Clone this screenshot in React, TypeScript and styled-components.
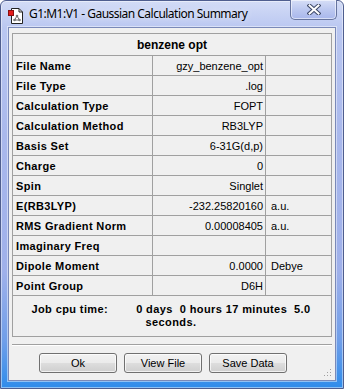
import React from 'react';
import styled, { createGlobalStyle } from 'styled-components';

const GlobalStyle = createGlobalStyle`
  html, body {
    margin: 0;
    padding: 0;
    background: #ffffff;
  }
  body {
    font-family: "Liberation Sans", Arial, sans-serif;
  }
`;

const Window = styled.div`
  box-sizing: border-box;
  width: 344px;
  height: 389px;
  display: flex;
  flex-flow: column nowrap;
  padding: 0 7px 7px 7px;
  border: 1px solid #4f5e8f;
  border-radius: 6px 6px 0 0;
  background: linear-gradient(
    to bottom,
    #d3dcf6 0%,
    #bac7f1 7%,
    #a9b8ec 35%,
    #9fb0ea 70%,
    #6f9ee9 88%,
    #2f8ceb 100%
  );
  box-shadow: inset 0 0 0 1px rgba(255, 255, 255, 0.45);
`;

const TitleBar = styled.div`
  height: 26px;
  display: flex;
  flex-flow: row nowrap;
  align-items: flex-start;
`;

const TitleIcon = styled.svg`
  flex-shrink: 0;
  margin: 6px 0 0 -1px;
`;

const TitleText = styled.span`
  margin: 4px 0 0 5px;
  font-family: "Noto Sans", "Open Sans", sans-serif;
  font-size: 12px;
  letter-spacing: -0.52px;
  line-height: 18px;
  color: #000;
  white-space: nowrap;
  text-shadow: 0 0 6px rgba(255, 255, 255, 0.8);
`;

const CloseButton = styled.div`
  box-sizing: border-box;
  margin: -1px -1px 0 auto;
  width: 47px;
  height: 20px;
  display: flex;
  align-items: center;
  justify-content: center;
  border: 1px solid #66749f;
  border-top: none;
  border-radius: 0 0 5px 5px;
  background: linear-gradient(to bottom, #d6def6 0%, #bcc8f0 50%, #a8b7ec 100%);
  box-shadow: inset 0 0 0 1px rgba(255, 255, 255, 0.55);
`;

const Client = styled.div`
  position: relative;
  flex: 1;
  display: flex;
  flex-flow: column nowrap;
  padding: 5px 0 0 3px;
  background: #f0f0f0;
  border: 1px solid #7a89b8;
  box-shadow: 0 0 0 1px rgba(255, 255, 255, 0.45);
`;

const Grid = styled.div`
  display: grid;
  grid-template-columns: 139px 112px 65px;
  grid-template-rows: 21px repeat(12, 19px) 40px;
  gap: 1px;
  padding: 1px;
  width: 320px;
  box-sizing: border-box;
  background: #a0a0a0;
  font-size: 11px;
  color: #000;
`;

const Cell = styled.div<{ $align?: 'left' | 'right' | 'center'; $bold?: boolean }>`
  background: #f0f0f0;
  display: flex;
  align-items: center;
  justify-content: ${({ $align }) =>
    $align === 'right' ? 'flex-end' : $align === 'center' ? 'center' : 'flex-start'};
  padding: ${({ $align }) => ($align === 'right' ? '0 2px 0 0' : '0 0 0 3px')};
  font-weight: ${({ $bold }) => ($bold ? 700 : 400)};
  letter-spacing: ${({ $bold }) => ($bold ? '0.35px' : '0')};
  white-space: nowrap;
  overflow: hidden;
`;

const HeaderCell = styled(Cell)`
  grid-column: 1 / span 3;
  padding: 0;
  font-size: 12px;
  letter-spacing: 0;
`;

const UnitCell = styled(Cell)`
  padding-left: 5px;
`;

const JobCell = styled.div`
  grid-column: 1 / span 3;
  background: #f0f0f0;
  display: flex;
  flex-flow: column nowrap;
  align-items: center;
  justify-content: center;
  font-weight: 700;
  font-size: 11px;
  letter-spacing: 0.4px;
  line-height: 13px;
  padding-right: 2px;
`;

const JobLine = styled.div`
  display: flex;
  gap: 28px;
  white-space: pre;
`;

const Separator = styled.div`
  width: 320px;
  height: 1px;
  margin-top: 7px;
  background: #a0a0a0;
  border-bottom: 1px solid #ffffff;
`;

const ButtonRow = styled.div`
  display: flex;
  gap: 7px;
  padding: 7px 0 0 27px;
`;

const Button = styled.button`
  box-sizing: border-box;
  width: 78px;
  height: 20px;
  padding: 0;
  border: 1px solid #707070;
  border-radius: 3px;
  background: linear-gradient(to bottom, #f2f2f2 0%, #ebebeb 48%, #dddddd 52%, #cfcfcf 100%);
  box-shadow: inset 0 0 0 1px rgba(255, 255, 255, 0.7);
  font-family: "Liberation Sans", Arial, sans-serif;
  font-size: 11px;
  color: #000;
`;

const Grip = styled.svg`
  position: absolute;
  right: 3px;
  bottom: 3px;
`;

const rows: [string, string, string?][] = [
  ['File Name', 'gzy_benzene_opt'],
  ['File Type', '.log'],
  ['Calculation Type', 'FOPT'],
  ['Calculation Method', 'RB3LYP'],
  ['Basis Set', '6-31G(d,p)'],
  ['Charge', '0'],
  ['Spin', 'Singlet'],
  ['E(RB3LYP)', '-232.25820160', 'a.u.'],
  ['RMS Gradient Norm', '0.00008405', 'a.u.'],
  ['Imaginary Freq', ''],
  ['Dipole Moment', '0.0000', 'Debye'],
  ['Point Group', 'D6H'],
];

function AppIcon() {
  return (
    <TitleIcon width='17' height='18' viewBox='0 0 17 18'>
      <path d='M4.5 1.5 H12 L15.5 5 V16.5 H4.5 Z' fill='#fff' stroke='#222' />
      <path d='M12 1.5 V5 H15.5' fill='none' stroke='#222' />
      <rect x='1.5' y='3.5' width='5' height='5' fill='#e41b1b' stroke='#8a1010' />
      <g stroke='#6e6e6e' strokeWidth='1'>
        <line x1='10' y1='9' x2='7.5' y2='13' />
        <line x1='10' y1='9' x2='12.5' y2='13' />
        <line x1='7.5' y1='13' x2='12.5' y2='13' />
      </g>
      <circle cx='10' cy='9' r='1.3' fill='#777' />
      <circle cx='7.5' cy='13' r='1.3' fill='#777' />
      <circle cx='12.5' cy='13' r='1.3' fill='#777' />
    </TitleIcon>
  );
}

function CloseGlyph() {
  return (
    <svg width='14' height='11' viewBox='0 0 14 11'>
      <path d='M2.5 1.5 L11.5 9.5 M11.5 1.5 L2.5 9.5' stroke='#3c4766' strokeWidth='4' strokeLinecap='square' />
      <path d='M2.5 1.5 L11.5 9.5 M11.5 1.5 L2.5 9.5' stroke='#ffffff' strokeWidth='2' strokeLinecap='square' />
    </svg>
  );
}

export default function App() {
  return (
    <>
      <GlobalStyle />
      <Window>
        <TitleBar>
          <AppIcon />
          <TitleText>G1:M1:V1 - Gaussian Calculation Summary</TitleText>
          <CloseButton>
            <CloseGlyph />
          </CloseButton>
        </TitleBar>
        <Client>
          <Grid>
            <HeaderCell $align='center' $bold>
              benzene opt
            </HeaderCell>
            {rows.map(([label, value, unit]) => (
              <React.Fragment key={label}>
                <Cell $bold>{label}</Cell>
                <Cell $align='right'>{value}</Cell>
                <UnitCell>{unit ?? ''}</UnitCell>
              </React.Fragment>
            ))}
            <JobCell>
              <JobLine>
                <span>Job cpu time:</span>
                <span>0 days  0 hours 17 minutes  5.0</span>
              </JobLine>
              <div>seconds.</div>
            </JobCell>
          </Grid>
          <Separator />
          <ButtonRow>
            <Button>Ok</Button>
            <Button>View File</Button>
            <Button>Save Data</Button>
          </ButtonRow>
          <Grip width='8' height='8' viewBox='0 0 8 8'>
            <rect x='6' y='0' width='1' height='1' fill='#a0a0a0' />
            <rect x='3' y='3' width='1' height='1' fill='#a0a0a0' />
            <rect x='6' y='3' width='1' height='1' fill='#a0a0a0' />
            <rect x='0' y='6' width='1' height='1' fill='#a0a0a0' />
            <rect x='3' y='6' width='1' height='1' fill='#a0a0a0' />
            <rect x='6' y='6' width='1' height='1' fill='#a0a0a0' />
          </Grip>
        </Client>
      </Window>
    </>
  );
}
